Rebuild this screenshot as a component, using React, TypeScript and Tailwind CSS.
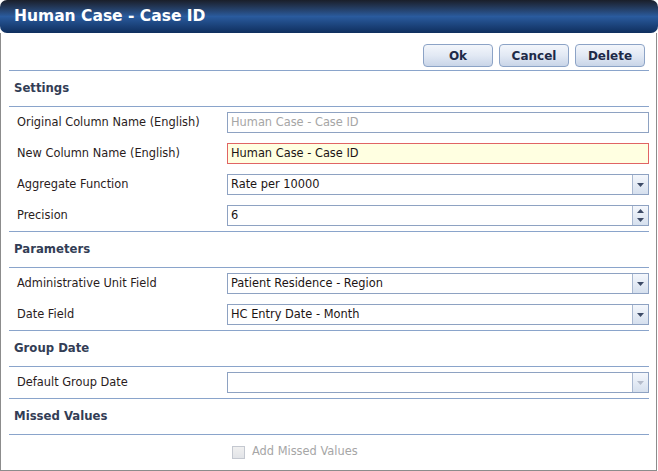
import React from "react";

const font = { fontFamily: '"DejaVu Sans", Verdana, sans-serif' };

const Line = () => <div className="h-px bg-[#8aa4cb]" />;

const Header: React.FC<{ title: string }> = ({ title }) => (
  <>
    <Line />
    <div className="h-[35px] flex items-center pl-[5px] pt-[1px] text-[11.7px] font-bold text-[#333d55]">
      {title}
    </div>
    <Line />
  </>
);

const Arrow: React.FC<{ up?: boolean; faded?: boolean }> = ({ up, faded }) => (
  <svg width="7" height="4" viewBox="0 0 7 4" className={up ? "rotate-180" : ""}>
    <path d="M0 0h7L3.5 4z" fill={faded ? "#b5bccb" : "#3c4a66"} />
  </svg>
);

const Row: React.FC<{ label: string; children: React.ReactNode }> = ({
  label,
  children,
}) => (
  <div className="flex items-center h-[31px]">
    <div className="w-[218px] pl-[8px] pt-[1px] text-[11.4px] text-[#2a1c1c]">{label}</div>
    <div className="flex-1">{children}</div>
  </div>
);

const Field: React.FC<{
  value?: string;
  muted?: boolean;
  invalid?: boolean;
  kind?: "text" | "select" | "spin";
  disabled?: boolean;
}> = ({ value = "", muted, invalid, kind = "text", disabled }) => (
  <div
    className={`flex h-[21px] border ${
      invalid ? "border-[#e06464] bg-[#ffffe1]" : "border-[#8ea2c2] bg-white"
    }`}
  >
    <div
      className={`flex-1 flex items-center pl-[3px] pt-[1px] text-[11.4px] ${
        muted ? "text-[#a6a6a6]" : "text-[#1c1414]"
      }`}
    >
      {value}
    </div>
    {kind === "select" && (
      <div className="w-[16px] flex items-center justify-center border-l border-[#a9b8d0] bg-gradient-to-b from-[#f4f7fc] to-[#d6e0ee]">
        <Arrow faded={disabled} />
      </div>
    )}
    {kind === "spin" && (
      <div className="w-[16px] flex flex-col items-center justify-center gap-[5px] border-l border-[#a9b8d0] bg-gradient-to-b from-[#f4f7fc] to-[#d6e0ee]">
        <Arrow up />
        <Arrow />
      </div>
    )}
  </div>
);

const Btn: React.FC<{ text: string }> = ({ text }) => (
  <button className="w-[70px] h-[23px] rounded-[4px] border border-[#8ca3c6] bg-gradient-to-b from-[#f3f6fb] via-[#e2e9f4] to-[#c9d5e8] text-[12px] font-bold text-[#1d2a48]">
    {text}
  </button>
);

export default function App() {
  return (
    <div className="w-[658px] h-[471px] bg-white" style={font}>
      <div className="h-[33px] rounded-[7px] bg-gradient-to-b from-[#1a1f2a] via-[#2a5b9e] to-[#0f2f5e] flex items-center pl-[14px] text-[15.5px] font-bold text-white">
        Human Case - Case ID
      </div>
      <div className="w-[657px] h-[438px] border-x border-b border-[#8c8c8c] pl-[8px] pr-[7px]">
        <div className="flex justify-end gap-[6px] pt-[11px] pb-[3px] pr-[4px]">
          <Btn text="Ok" />
          <Btn text="Cancel" />
          <Btn text="Delete" />
        </div>
        <Header title="Settings" />
        <Row label="Original Column Name (English)">
          <Field value="Human Case - Case ID" muted />
        </Row>
        <Row label="New Column Name (English)">
          <Field value="Human Case - Case ID" invalid />
        </Row>
        <Row label="Aggregate Function">
          <Field value="Rate per 10000" kind="select" />
        </Row>
        <Row label="Precision">
          <Field value="6" kind="spin" />
        </Row>
        <Header title="Parameters" />
        <Row label="Administrative Unit Field">
          <Field value="Patient Residence - Region" kind="select" />
        </Row>
        <Row label="Date Field">
          <Field value="HC Entry Date - Month" kind="select" />
        </Row>
        <Header title="Group Date" />
        <Row label="Default Group Date">
          <Field kind="select" disabled />
        </Row>
        <Header title="Missed Values" />
        <div className="flex items-center h-[34px] pl-[223px] gap-[7px] text-[11.4px] text-[#a6a6a6]">
          <div className="w-[13px] h-[13px] border border-[#c4c8d0] bg-gradient-to-b from-[#f0f0f0] to-[#e2e4e8]" />
          Add Missed Values
        </div>
      </div>
    </div>
  );
}
